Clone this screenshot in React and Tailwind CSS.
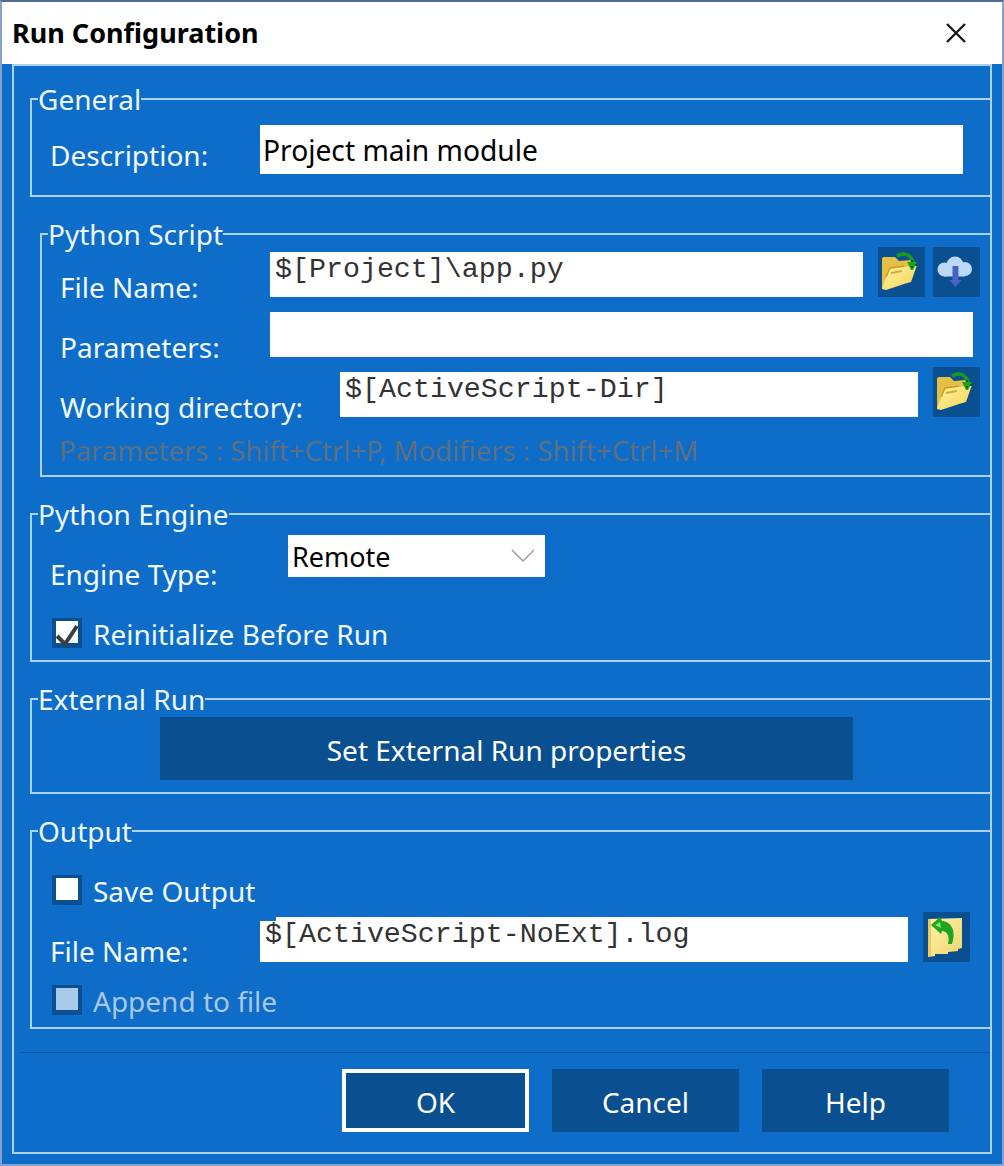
import React from "react";

const FONT = "font-['Noto_Sans','Open_Sans',sans-serif]";

function FolderOpen() {
  return (
    <svg width="47" height="50" viewBox="0 0 47 50">
      <defs>
        <linearGradient id="fo" x1="0" y1="0" x2="1" y2="1">
          <stop offset="0" stopColor="#fff3a0" />
          <stop offset="1" stopColor="#f5d458" />
        </linearGradient>
      </defs>
      <path d="M4 11 L6 10 L17 10 L21 14 L33 13 L35 30 L7 42 L4 42 Z" fill="#e6c044" />
      <path d="M4 42 L11 22 L39 18 L33 35 L26 37 L8 43 Z" fill="url(#fo)" />
      <path d="M8 30 L12 21 L26 19" fill="none" stroke="#c99d2c" strokeWidth="1.6" />
      <path d="M13 26 L24 24" stroke="#d3a936" strokeWidth="1.8" />
      <path d="M19 9 C26 5 33 7 35 16" fill="none" stroke="#1d9a1d" strokeWidth="3.6" />
      <path d="M29 15 L39 15 L35 23 L33 23 Z" fill="#1aa51a" />
      <path d="M33 13 h2 v2 h-2z M37 17 h2 v2 h-2z M33 19 h2 v2 h-2z" fill="#0b5c12" />
    </svg>
  );
}

function CloudDown() {
  return (
    <svg width="47" height="50" viewBox="0 0 47 50">
      <g fill="#bcd9f8">
        <circle cx="22" cy="18" r="8.5" />
        <circle cx="11.5" cy="22.5" r="7" />
        <circle cx="32" cy="22" r="7" />
        <path d="M11 21 H32 V29.5 H11 Z" />
      </g>
      <path d="M19.5 19 h6 v14 h3 l-6 7 l-6 -7 h3 z" fill="#4a62c4" />
    </svg>
  );
}

function FolderBack() {
  return (
    <svg width="47" height="50" viewBox="0 0 47 50">
      <defs>
        <linearGradient id="fb" x1="0" y1="0" x2="1" y2="1">
          <stop offset="0" stopColor="#fff4b0" />
          <stop offset="1" stopColor="#f0d26c" />
        </linearGradient>
      </defs>
      <path d="M5 7 L39 6 L39 36 L35 37 L35 39 L25 40 L25 42 L12 42 L12 44 L5 45 Z" fill="url(#fb)" />
      <path d="M5 7 L8 7 L8 44 L5 45 Z" fill="#ecca62" />
      <path d="M8 13 L17 5 L19 9 C27 9 34 18 29 32 L25 32 C27 24 24 19 19 19 L18 22 Z" fill="#1fa51f" />
      <path d="M12 13 L17 10 L18 16 Z" fill="#8ae274" />
    </svg>
  );
}

function Check({ checked, disabled }) {
  return (
    <span className="flex h-[30px] w-[30px] shrink-0 bg-[#0a4f8f] pl-[4px] pt-[3px]">
      <span className={`relative block h-[22px] w-[22px] ${disabled ? "bg-[#a9c9e9]" : "bg-white"}`}>
        {checked && (
          <svg className="absolute left-[-1px] top-[1px]" width="26" height="26" viewBox="0 0 26 26">
            <path d="M2 14 L10 22 L22 4" fill="none" stroke="#3a3f46" strokeWidth="4" />
          </svg>
        )}
      </span>
    </span>
  );
}

function Group({ title, className, bodyClassName, children }) {
  return (
    <fieldset className={`border-2 border-r-0 border-[#a9d2f3] ${className}`}>
      <legend className="ml-[6px] h-[32px] text-[28px] leading-[32px] text-[#eef7ff]">{title}</legend>
      <div className={bodyClassName}>{children}</div>
    </fieldset>
  );
}

function Label({ className, children, muted }) {
  return (
    <span className={`block shrink-0 text-[28px] leading-[32px] ${muted ? "text-[#a9c6e2]" : "text-[#f2f9ff]"} ${className}`}>
      {children}
    </span>
  );
}

function MonoInput({ className, children }) {
  return (
    <div className={`h-[45px] shrink-0 bg-white font-['Liberation_Mono',monospace] text-[28.3px] leading-[34px] text-[#333] ${className}`}>
      {children}
    </div>
  );
}

function IconBtn({ className, children }) {
  return <div className={`flex h-[50px] w-[47px] shrink-0 bg-[#0a4f8f] ${className}`}>{children}</div>;
}

function DialogButton({ className, children }) {
  return (
    <button className={`flex h-[63px] w-[187px] items-center justify-center bg-[#0a4f8f] pt-[2px] text-[28px] text-white ${className}`}>
      {children}
    </button>
  );
}

export default function App() {
  return (
    <div className={`flex h-[1166px] w-[1004px] flex-col overflow-hidden border-2 border-[#86a0cf] border-t-[#4f6a96] bg-[#0d6dc8] ${FONT}`}>
      <header className="flex h-[62px] shrink-0 items-center justify-between bg-white pl-[10px] pr-[34px]">
        <h1 className="pb-[2px] text-[27px] font-bold leading-none text-black">Run Configuration</h1>
        <svg width="24" height="24" viewBox="0 0 24 24">
          <path d="M3 3 L21 21 M21 3 L3 21" stroke="#1a1a1a" strokeWidth="2.4" />
        </svg>
      </header>

      <main className="ml-[10px] h-[1090px] w-[980px] border-2 border-[#a9d2f3]">
        <Group title="General" className="ml-[16px] mt-[17px]" bodyClassName="pb-[21px] pl-[18px] pt-[10px]">
          <div className="flex h-[49px] items-start">
            <Label className="mt-[14px] w-[210px]">Description:</Label>
            <div className="flex h-[49px] w-[703px] items-center bg-white pl-[3px] pt-[2px] text-[28.2px] text-black">Project main module</div>
          </div>
        </Group>

        <Group title="Python Script" className="ml-[26px] mt-[21px]" bodyClassName="pb-[8px] pl-[18px] pt-[2px]">
          <div className="flex h-[45px] items-start">
            <Label className="mt-[19px] w-[210px]">File Name:</Label>
            <MonoInput className="w-[593px] pl-[5px]">$[Project]\app.py</MonoInput>
            <IconBtn className="-mt-[5px] ml-[15px]"><FolderOpen /></IconBtn>
            <IconBtn className="-mt-[5px] ml-[8px]"><CloudDown /></IconBtn>
          </div>
          <div className="mt-[15px] flex h-[45px] items-start">
            <Label className="mt-[19px] w-[210px]">Parameters:</Label>
            <MonoInput className="w-[703px]" />
          </div>
          <div className="mt-[15px] flex h-[45px] items-start">
            <Label className="mt-[19px] w-[280px]">Working directory:</Label>
            <MonoInput className="w-[578px] pl-[5px]">$[ActiveScript-Dir]</MonoInput>
            <IconBtn className="-mt-[5px] ml-[15px]"><FolderOpen /></IconBtn>
          </div>
          <p className="-ml-[1px] mt-[18px] h-[32px] whitespace-pre text-[27.5px] leading-[32px] text-[#5f6f80]">Parameters : Shift+Ctrl+P, Modifiers : Shift+Ctrl+M</p>
        </Group>

        <Group title="Python Engine" className="ml-[16px] mt-[21px]" bodyClassName="pl-[20px] pt-[5px]">
          <div className="flex h-[42px] items-start">
            <Label className="-ml-[2px] mt-[23px] w-[238px]">Engine Type:</Label>
            <div className="flex h-[42px] w-[257px] items-center justify-between bg-white pl-[4px] pr-[10px] text-[27px] text-black">
              <span className="pt-[2px]">Remote</span>
              <svg width="24" height="14" viewBox="0 0 24 14">
                <path d="M1 1 L12 12 L23 1" fill="none" stroke="#9a9a9a" strokeWidth="1.4" />
              </svg>
            </div>
          </div>
          <div className="mb-[12px] mt-[41px] flex h-[30px] items-center gap-[11px]">
            <Check checked />
            <Label className="mt-[2px]">Reinitialize Before Run</Label>
          </div>
        </Group>

        <Group title="External Run" className="ml-[16px] mt-[21px]" bodyClassName="pb-[12px] pl-[128px] pt-[2px]">
          <button className="flex h-[63px] w-[693px] items-center justify-center bg-[#0a4f8f] pt-[2px] text-[28px] text-white">Set External Run properties</button>
        </Group>

        <Group title="Output" className="ml-[16px] mt-[21px]" bodyClassName="pb-[12px] pl-[20px] pt-[28px]">
          <div className="flex h-[30px] items-center gap-[11px]">
            <Check />
            <Label className="mt-[2px]">Save Output</Label>
          </div>
          <div className="mt-[12px] flex h-[45px] items-start">
            <Label className="-ml-[2px] mt-[18px] w-[210px]">File Name:</Label>
            <MonoInput className="relative w-[648px] pl-[5px]">
              <span className="absolute left-0 top-0 h-[4px] w-[16px] bg-[#0d6dc8]" />
              $[ActiveScript-NoExt].log
            </MonoInput>
            <IconBtn className="-mt-[5px] ml-[15px]"><FolderBack /></IconBtn>
          </div>
          <div className="mt-[23px] flex h-[30px] items-center gap-[11px]">
            <Check disabled />
            <Label muted className="mt-[2px]">Append to file</Label>
          </div>
        </Group>

        <div className="ml-[6px] mt-[23px] h-[2px] border-t border-[#0a58a8] border-b-[#2c80d2]" />

        <footer className="mt-[15px] flex justify-end gap-[23px] pr-[41px]">
          <DialogButton className="border-4 border-white">OK</DialogButton>
          <DialogButton>Cancel</DialogButton>
          <DialogButton>Help</DialogButton>
        </footer>
      </main>
    </div>
  );
}
